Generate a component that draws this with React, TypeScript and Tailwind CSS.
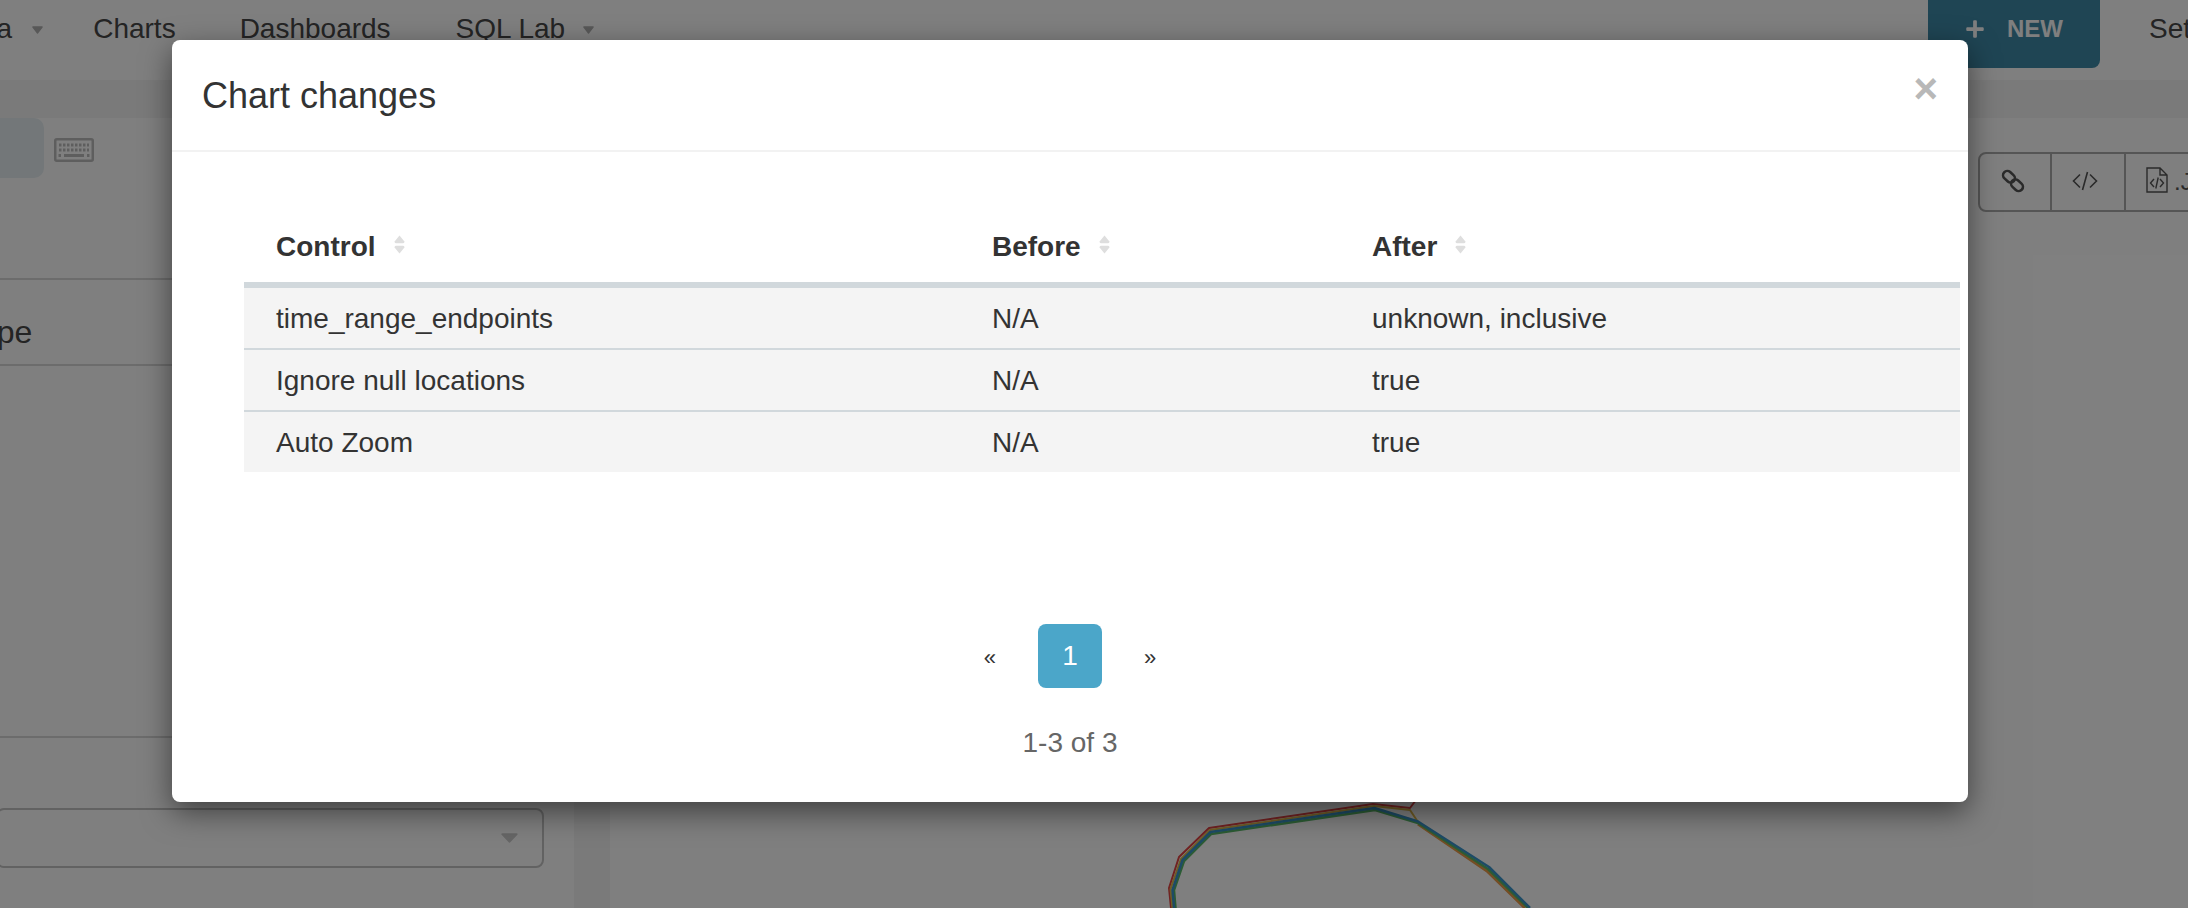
import { FaPlus } from "react-icons/fa";

function Caret({ className }: { className: string }) {
  return (
    <svg className={className} viewBox="0 0 12 8" preserveAspectRatio="none">
      <path d="M1 1h10L6 7z" fill="currentColor" stroke="currentColor" strokeWidth="1.5" strokeLinejoin="round" />
    </svg>
  );
}

function SortIcon() {
  return (
    <svg className="ml-[18px] -mt-[5px] shrink-0" width="11" height="19" viewBox="0 0 11 19">
      <path d="M5.5 0.6 L10.4 6.6 Q10.6 8.2 9.2 8.2 H1.8 Q0.4 8.2 0.6 6.6 Z" fill="#dedede" />
      <path d="M1.8 10.8 H9.2 Q10.6 10.8 10.4 12.4 L5.5 18.4 L0.6 12.4 Q0.4 10.8 1.8 10.8 Z" fill="#dedede" />
    </svg>
  );
}

function Keyboard() {
  return (
    <svg className="ml-[10px] mt-[20px]" width="40" height="24" viewBox="0 0 40 24" fill="none" stroke="#bdbdbd">
      <rect x="1.25" y="1.25" width="37.5" height="21.5" rx="1.5" strokeWidth="2.5" />
      <path d="M5 7h30M5 12h30" strokeWidth="3" strokeDasharray="2.5 1.5" />
      <path d="M10 17.5h20" strokeWidth="3" />
      <path d="M4.5 17.5h2.5M33 17.5h2.5" strokeWidth="3" />
    </svg>
  );
}

const rows = [
  ["time_range_endpoints", "N/A", "unknown, inclusive"],
  ["Ignore null locations", "N/A", "true"],
  ["Auto Zoom", "N/A", "true"],
];

function Header({ label, width }: { label: string; width: string }) {
  return (
    <th className={`${width} h-[76px] pl-[32px] text-left align-middle border-b-[6px] border-[#d1d8dc]`}>
      <div className="flex items-center font-bold text-[28px] leading-[40px] text-[#333333]">
        <span>{label}</span>
        <SortIcon />
      </div>
    </th>
  );
}

export default function App() {
  return (
    <div className="relative w-[2188px] h-[908px] overflow-hidden bg-white font-['Liberation_Sans',Arial,sans-serif] text-[#484848]">
      <nav className="flex h-[80px] bg-white text-[28px]">
        <div className="flex flex-1 min-w-0 h-[58px] items-center">
          <span className="-ml-[47px]">Data</span>
          <Caret className="ml-[20px] mt-[2px] h-[8px] w-[11px] text-[#b0b0b0]" />
          <span className="ml-[50px]">Charts</span>
          <span className="ml-[64px]">Dashboards</span>
          <span className="ml-[65px]">SQL Lab</span>
          <Caret className="ml-[18px] mt-[2px] h-[8px] w-[11px] text-[#b0b0b0]" />
        </div>
        <div className="flex w-[260px] shrink-0 items-start">
          <div className="flex h-[68px] w-[172px] shrink-0 items-center rounded-b-[8px] bg-[#3e8aa8] pb-[10px] pl-[37px] text-white">
            <FaPlus size={20} />
            <span className="ml-[22px] text-[24px] font-bold">NEW</span>
          </div>
          <span className="ml-[49px] h-[58px] leading-[58px] whitespace-nowrap">Settings</span>
        </div>
      </nav>

      <div className="h-[38px] bg-[#f5f5f5]" />

      <div className="flex h-[790px]">
        <div className="w-[574px] shrink-0 bg-white overflow-hidden">
          <div className="flex h-[160px] items-start">
            <div className="h-[60px] w-[44px] rounded-r-[10px] bg-[#e6eff2]" />
            <Keyboard />
          </div>
          <div className="h-[88px] border-y-2 border-[#d9d9d9] flex items-center pt-[20px] text-[32px] text-[#484848]">
            <span className="-ml-[37px]">Type</span>
          </div>
          <div className="h-[372px] border-b-2 border-[#d9d9d9]" />
          <div className="mt-[70px] mr-[30px] -ml-[4px] flex h-[60px] items-center justify-end rounded-[8px] border-2 border-[#c4c4c4] pr-[24px]">
            <Caret className="h-[10px] w-[17px] text-[#cccccc]" />
          </div>
        </div>
        <div className="w-[36px] shrink-0 bg-[#f5f5f5]" />
        <div className="flex-1 min-w-0 bg-white overflow-hidden">
          <div className="mt-[34px] ml-[1368px] flex h-[60px] w-[300px] items-stretch rounded-l-[8px] border-2 border-[#aaaaaa] text-[#555555]">
            <div className="flex w-[72px] shrink-0 items-center justify-center border-r-2 border-[#aaaaaa] pr-[5px]">
              <svg width="24" height="24" viewBox="0 0 24 24" fill="none" stroke="#555555" strokeWidth="2.6" className="-mt-[2px]">
                <rect x="1.5" y="3.5" width="13" height="8.5" rx="4.25" transform="rotate(42 8 7.75)" />
                <rect x="9.5" y="12" width="13" height="8.5" rx="4.25" transform="rotate(42 16 16.25)" />
              </svg>
            </div>
            <div className="flex w-[74px] shrink-0 items-center justify-center border-r-2 border-[#aaaaaa] pr-[6px]">
              <svg width="26" height="20" viewBox="0 0 26 20" fill="none" stroke="#555555" strokeWidth="1.6" className="-mt-[2px]">
                <path d="M8 3.5 1.5 10 8 16.5M18 3.5 24.5 10 18 16.5M15.5 1 10.5 19" />
              </svg>
            </div>
            <div className="flex items-center pl-[20px] text-[24px]">
              <svg width="22" height="26" viewBox="0 0 22 26" fill="none" stroke="#555555" strokeWidth="1.4" className="-mt-[4px]">
                <path d="M1 1H14L21 8V25H1ZM14 1V8H21" />
                <path d="M8 12 4.5 16 8 20M14 12 17.5 16 14 20M12.2 10.5 9.8 21.5" />
              </svg>
              <span className="ml-[6px]">.JSON</span>
            </div>
          </div>
          <svg className="mt-[548px] ml-[490px]" width="500" height="148" viewBox="0 0 500 148" fill="none" strokeLinejoin="round">
            <polyline points="71,148 69,128 79,97 109,68 273,44 310,48 316,40" stroke="#e04444" strokeWidth="2" />
            <polyline points="72.5,148 70.5,129 81,99 110,70 274,46 310,50 318,62" stroke="#e0b848" strokeWidth="2" />
            <polyline points="318,64 387,111 425,148" stroke="#e89a48" strokeWidth="3" />
            <polyline points="75.5,148 74,130 84,101 111,74 275,50 318,63 388,109 428,148" stroke="#58b868" strokeWidth="2.5" />
            <polyline points="74,148 72.5,130 82.5,100 110.5,72 274.5,48 318,61.5 389,107 430,148" stroke="#3a96cc" strokeWidth="2.5" />
          </svg>
        </div>
      </div>

      <div className="absolute inset-0 bg-black/50" />

      <div className="absolute left-[172px] top-[40px] flex h-[762px] w-[1796px] flex-col rounded-[8px] bg-white shadow-[0_10px_30px_rgba(0,0,0,0.5)]">
        <div className="flex h-[112px] shrink-0 items-start justify-between border-b-2 border-[#f2f2f2] pl-[30px] pr-[30px]">
          <h2 className="mt-[31px] text-[36px] leading-[50px] text-[#333333]">Chart changes</h2>
          <span className="mt-[22px] text-[42px] font-bold leading-[54px] text-[#b8b8b8]">×</span>
        </div>
        <div className="flex flex-1 flex-col pl-[72px] pr-[8px] pt-[60px]">
          <table className="w-[1716px] table-fixed border-separate border-spacing-0">
            <thead>
              <tr>
                <Header label="Control" width="w-[716px]" />
                <Header label="Before" width="w-[380px]" />
                <Header label="After" width="w-[620px]" />
              </tr>
            </thead>
            <tbody className="text-[28px] text-[#333333]">
              {rows.map((row, i) => (
                <tr key={row[0]} className="bg-[#f4f4f4]">
                  {row.map((cell, j) => (
                    <td key={j} className={`pl-[32px] pt-[2px] ${i < 2 ? "h-[62px] border-b-2 border-[#d1d8dc]" : "h-[60px]"}`}>{cell}</td>
                  ))}
                </tr>
              ))}
            </tbody>
          </table>
          <div className="mt-[152px] -ml-[64px] flex items-center justify-center">
            <span className="mr-[42px] pt-[2px] text-[22px] text-[#333333]">«</span>
            <span className="flex h-[64px] w-[64px] items-center justify-center rounded-[8px] bg-[#4ba6c9] text-[28px] text-white">1</span>
            <span className="ml-[42px] pt-[2px] text-[22px] text-[#333333]">»</span>
          </div>
          <div className="mt-[35px] -ml-[64px] text-center text-[28px] leading-[40px] text-[#666666]">1-3 of 3</div>
        </div>
      </div>
    </div>
  );
}
